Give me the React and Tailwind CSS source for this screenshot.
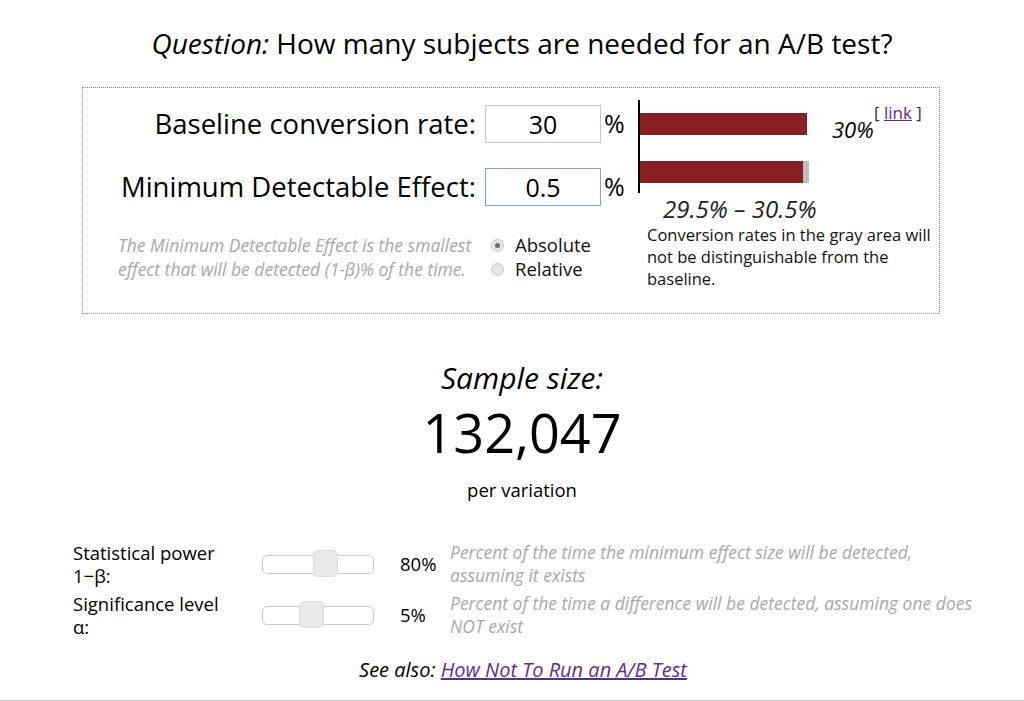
import React, { useState } from "react";

const font = { fontFamily: '"Open Sans", "Noto Sans", sans-serif' };

function Radio({ checked, label }) {
  return (
    <div className="flex items-center h-6">
      <span className="w-[13px] h-[13px] rounded-full border border-[#c8c8c8] bg-[#e6e6e6] flex items-center justify-center mr-[11px]">
        {checked && <span className="w-[5px] h-[5px] rounded-full bg-[#6a6a6a]"></span>}
      </span>
      <span className="text-[18.5px] text-[#111]">{label}</span>
    </div>
  );
}

function Slider({ pos }) {
  return (
    <div className="relative w-[112px] h-[19px] rounded-[5px] border border-[#c9c9c9] bg-white">
      <div
        className="absolute top-[-6px] w-[25px] h-[27px] rounded-[5px] border border-[#dadada] bg-[#e9e9e9]"
        style={{ left: pos }}
      ></div>
    </div>
  );
}

export default function App() {
  const [baseline, setBaseline] = useState("30");
  const [mde, setMde] = useState("0.5");
  const [mode, setMode] = useState("absolute");

  return (
    <div className="w-[1024px] h-[701px] bg-white text-black flex flex-col relative" style={font}>
      <h1 className="text-[28px] text-center mt-[24px] leading-[38px] pl-[20px]">
        <em>Question:</em> How many subjects are needed for an A/B test?
      </h1>

      <div className="ml-[82px] mt-[25px] w-[858px] h-[227px] border border-dotted border-[#8a8a8a] flex">
        <div className="w-[555px] flex flex-col pt-[17px]">
          <div className="flex items-center h-[38px]">
            <div className="w-[394px] text-right text-[27.5px] pr-[1px] whitespace-nowrap">Baseline conversion rate:</div>
            <input
              value={baseline}
              onChange={(e) => setBaseline(e.target.value)}
              className="ml-[8px] w-[116px] h-[38px] border border-[#c6c6c6] text-center text-[25px] outline-none"
            />
            <span className="ml-[3px] text-[25px]">%</span>
          </div>
          <div className="flex items-center h-[38px] mt-[25px]">
            <div className="w-[394px] text-right text-[27.5px] pr-[1px] whitespace-nowrap">Minimum Detectable Effect:</div>
            <input
              value={mde}
              onChange={(e) => setMde(e.target.value)}
              className="ml-[8px] w-[116px] h-[38px] border border-[#7ea6d6] text-center text-[25px] outline-none"
            />
            <span className="ml-[3px] text-[25px]">%</span>
          </div>
          <div className="flex mt-[27px]">
            <p className="ml-[35px] w-[360px] italic text-[17.5px] leading-[24px] text-[#a8a8a8]">
              The Minimum Detectable Effect is the smallest effect that will be detected (1-β)% of the time.
            </p>
            <div className="ml-[13px] flex flex-col" onClick={() => setMode(mode === "absolute" ? "relative" : "absolute")}>
              <Radio checked={mode === "absolute"} label="Absolute" />
              <Radio checked={mode === "relative"} label="Relative" />
            </div>
          </div>
        </div>

        <div className="flex flex-col pt-[12px]">
          <div className="flex">
            <div className="w-[2px] h-[93px] bg-black"></div>
            <div className="flex flex-col pt-[13px]">
              <div className="w-[167px] h-[22px] bg-[#871f24]"></div>
              <div className="flex mt-[26px]">
                <div className="w-[163px] h-[22px] bg-[#871f24]"></div>
                <div className="w-[6px] h-[22px] bg-[#bdbdbd]"></div>
              </div>
            </div>
            <div className="relative ml-[23px] mt-[13px] h-[30px]">
              <span className="italic text-[22px]">30%</span>
              <span className="absolute left-[42px] top-[-13px] text-[17px] whitespace-nowrap text-[#333]">
                [ <a href="#" className="text-[#5b2d8e] underline">link</a> ]
              </span>
            </div>
          </div>
          <div className="ml-[25px] mt-[1px] italic text-[24px] leading-[30px] text-[#222]">29.5% – 30.5%</div>
          <p className="ml-[9px] mt-[0px] w-[290px] text-[16.5px] leading-[22px] text-[#111]">
            Conversion rates in the gray area will not be distinguishable from the baseline.
          </p>
        </div>
      </div>

      <div className="flex flex-col items-center mt-[44px] pl-[20px]">
        <div className="italic text-[30px] leading-[40px]">Sample size:</div>
        <div className="text-[54px] leading-[60px] mt-[4px]">132,047</div>
        <div className="text-[18.5px] leading-[26px] mt-[15px]">per variation</div>
      </div>

      <div className="flex flex-col ml-[73px] mt-[38px]">
        <div className="flex items-center">
          <div className="w-[189px] text-[18.5px] leading-[23px]">
            Statistical power<br />1−β:
          </div>
          <Slider pos="50px" />
          <div className="ml-[26px] w-[50px] text-[18.5px]">80%</div>
          <p className="italic text-[17.5px] leading-[23px] text-[#a8a8a8] w-[530px]">
            Percent of the time the minimum effect size will be detected, assuming it exists
          </p>
        </div>
        <div className="flex items-center mt-[5px]">
          <div className="w-[189px] text-[18.5px] leading-[23px]">
            Significance level<br />α:
          </div>
          <Slider pos="36px" />
          <div className="ml-[26px] w-[50px] text-[18.5px]">5%</div>
          <p className="italic text-[17.5px] leading-[23px] text-[#a8a8a8] w-[530px]">
            Percent of the time a difference will be detected, assuming one does NOT exist
          </p>
        </div>
      </div>

      <div className="text-center mt-[19px] text-[20px] leading-[26px] italic pl-[22px]">
        See also: <a href="#" className="text-[#5b2d8e] underline">How Not To Run an A/B Test</a>
      </div>

      <div className="absolute left-0 right-0 bottom-0 h-px bg-[#bdbdbd]"></div>
    </div>
  );
}
